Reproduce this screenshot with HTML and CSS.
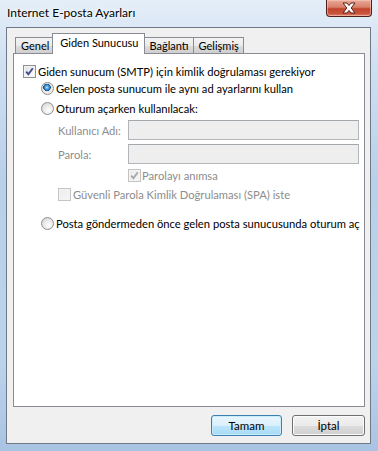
FILE: index.html
```html
<!DOCTYPE html>
<html lang="tr">
<head>
    <meta charset="UTF-8">
    <meta name="viewport" content="width=device-width, initial-scale=1.0">
    <title>Internet E-posta Ayarları</title>
    <link rel="stylesheet" href="styles.css">
</head>
<body>
    <div class="window">
        <div class="titlebar">
            <span class="title">Internet E-posta Ayarları</span>
            <div class="close">
                <svg width="18" height="12" viewBox="0 0 18 12">
                    <path d="M3 1 H7 L9 3.6 L11 1 H15 L11.2 6 L15 11 H11 L9 8.4 L7 11 H3 L6.8 6 Z" fill="#fff" stroke="#5a1f18" stroke-width="1"/>
                </svg>
            </div>
        </div>
        <div class="client">
            <div class="tabs">
                <div class="tab">Genel</div>
                <div class="tab active">Giden Sunucusu</div>
                <div class="tab">Bağlantı</div>
                <div class="tab">Gelişmiş</div>
            </div>
            <div class="panel">
                <div class="row">
                    <span class="check on"><svg width="11" height="11" viewBox="0 0 11 11"><path d="M2.2 5.6 L4.4 8.2 L8.8 2.2" fill="none" stroke="#3c4d96" stroke-width="1.9"/></svg></span>
                    Giden sunucum (SMTP) için kimlik doğrulaması gerekiyor
                </div>
                <div class="group">
                    <div class="row">
                        <span class="radio on"></span>
                        Gelen posta sunucum ile aynı ad ayarlarını kullan
                    </div>
                    <div class="row gap">
                        <span class="radio"></span>
                        Oturum açarken kullanılacak:
                    </div>
                    <div class="creds">
                        <div class="field">
                            <span class="label">Kullanıcı Adı:</span>
                            <span class="input"></span>
                        </div>
                        <div class="field second">
                            <span class="label">Parola:</span>
                            <span class="input"></span>
                        </div>
                        <div class="row disabled remember">
                            <span class="check off"><svg width="11" height="11" viewBox="0 0 11 11"><path d="M2.2 5.6 L4.4 8.2 L8.8 2.2" fill="none" stroke="#a8a8a8" stroke-width="1.9"/></svg></span>
                            Parolayı anımsa
                        </div>
                        <div class="row disabled spa">
                            <span class="check off"></span>
                            Güvenli Parola Kimlik Doğrulaması (SPA) iste
                        </div>
                    </div>
                    <div class="row last">
                        <span class="radio"></span>
                        Posta göndermeden önce gelen posta sunucusunda oturum aç
                    </div>
                </div>
            </div>
            <div class="footer">
                <div class="button default">Tamam</div>
                <div class="button cancel">İptal</div>
            </div>
        </div>
    </div>
</body>
</html>
```

FILE: styles.css
```css
* {
    box-sizing: border-box;
    margin: 0;
    padding: 0;
}
body {
    width: 378px;
    height: 451px;
    overflow: hidden;
    font-family: Lato, "Liberation Sans", sans-serif;
    font-size: 11.2px;
    color: #000;
}
.window {
    width: 378px;
    height: 451px;
    padding: 0 7px 7px 6px;
    background: linear-gradient(180deg, #e4eef8 0%, #d0e0f2 14%, #b9d0ea 40%, #bcd3ec 80%, #a9c3e2 100%);
}

/* title bar */
.titlebar {
    display: flex;
    justify-content: space-between;
    height: 27px;
}
.title {
    padding: 5px 0 0 1px;
    line-height: 16px;
    font-size: 12px;
    text-shadow: 0 0 6px #fff, 0 0 3px #fff;
}
.close {
    display: flex;
    align-items: center;
    justify-content: center;
    width: 46px;
    height: 17px;
    margin-right: -1px;
    border: 1px solid #4e2019;
    border-top: none;
    border-radius: 0 0 4px 4px;
    background: linear-gradient(180deg, #e9a99a 0%, #d8806b 45%, #c2432e 55%, #c9553e 85%, #e08c6e 100%);
    box-shadow: inset 0 0 0 1px rgba(255, 210, 200, 0.5);
}

/* client area */
.client {
    height: 417px;
    border: 1px solid #6f7a86;
    padding: 5px 5px 0 6px;
    background-color: #f0f0f0;
}
.tabs {
    display: flex;
    align-items: flex-end;
    height: 21px;
    margin-bottom: -1px;
    padding-left: 2px;
    position: relative;
    font-size: 11px;
}
.tab {
    height: 16px;
    margin-bottom: 1px;
    padding: 0 4px 0 5px;
    border: 1px solid #898c95;
    border-bottom: none;
    border-left: none;
    background: linear-gradient(180deg, #f3f3f3 0%, #ebebeb 50%, #dddddd 51%, #cfcfcf 100%);
    line-height: 16px;
    white-space: nowrap;
}
.tab:first-child {
    border-left: 1px solid #898c95;
}
.tab.active {
    height: 21px;
    margin: 0 -1px 0 -2px;
    padding: 0 6px 0 7px;
    border-left: 1px solid #898c95;
    background: #fff;
    line-height: 18px;
    position: relative;
}
.panel {
    height: 354px;
    border: 1px solid #898c95;
    padding: 9px 0 0 9px;
    background-color: #fff;
}

/* rows */
.row {
    display: flex;
    align-items: center;
    gap: 2px;
    height: 17px;
    white-space: nowrap;
}
.group {
    padding-left: 18px;
}
.row.gap {
    margin-top: 3px;
}
.row.disabled {
    color: #8d8d8d;
}
.check {
    display: inline-flex;
    align-items: center;
    justify-content: center;
    width: 13px;
    height: 13px;
    flex: none;
    border: 1px solid #8e8f8f;
    background: linear-gradient(135deg, #dcdcdc 0%, #f4f4f4 60%, #ffffff 100%);
    box-shadow: inset 0 0 0 1px #f4f4f4;
}
.check.off {
    border-color: #c4c4c4;
    background: linear-gradient(135deg, #ececec 0%, #f6f6f6 100%);
}
.radio {
    width: 13px;
    height: 13px;
    flex: none;
    border: 1px solid #8e8f8f;
    border-radius: 50%;
    background: radial-gradient(circle at 60% 65%, #ffffff 0%, #e6e6e6 55%, #c9c9c9 100%);
}
.radio.on {
    background: radial-gradient(circle at 45% 40%, #b7e3fa 0%, #3f8fd0 25%, #134e86 40%, #e4e4e4 44%, #f6f6f6 100%);
}

/* login fields */
.creds {
    padding-left: 17px;
}
.field {
    display: flex;
    align-items: center;
    margin-top: 3px;
    white-space: nowrap;
}
.field.second {
    margin-top: 4px;
}
.label {
    width: 70px;
    flex: none;
    color: #8d8d8d;
}
.input {
    width: 231px;
    height: 20px;
    border: 1px solid #b2b6ba;
    border-top-color: #a3a8ad;
    background-color: #eeeeee;
}
.remember {
    margin: 3px 0 0 70px;
    gap: 1px;
}
.spa {
    margin-top: 2px;
}
.row.last {
    margin-top: 12px;
}

/* buttons */
.footer {
    display: flex;
    justify-content: flex-end;
    gap: 10px;
    margin-top: 8px;
}
.button {
    width: 71px;
    height: 21px;
    border: 1px solid #707070;
    border-radius: 3px;
    background: linear-gradient(180deg, #f2f2f2 0%, #ebebeb 50%, #dddddd 51%, #cfcfcf 100%);
    box-shadow: inset 0 0 0 1px #fcfcfc;
    font-size: 11.5px;
    text-align: center;
    line-height: 19px;
}
.button.default {
    border-color: #3c7fb1;
    background: linear-gradient(180deg, #eaf6fd 0%, #d9f0fc 50%, #bee6fd 51%, #a7d9f5 100%);
    box-shadow: inset 0 0 0 1px #c8ecfc;
}
.button.cancel {
    width: 73px;
}
```
